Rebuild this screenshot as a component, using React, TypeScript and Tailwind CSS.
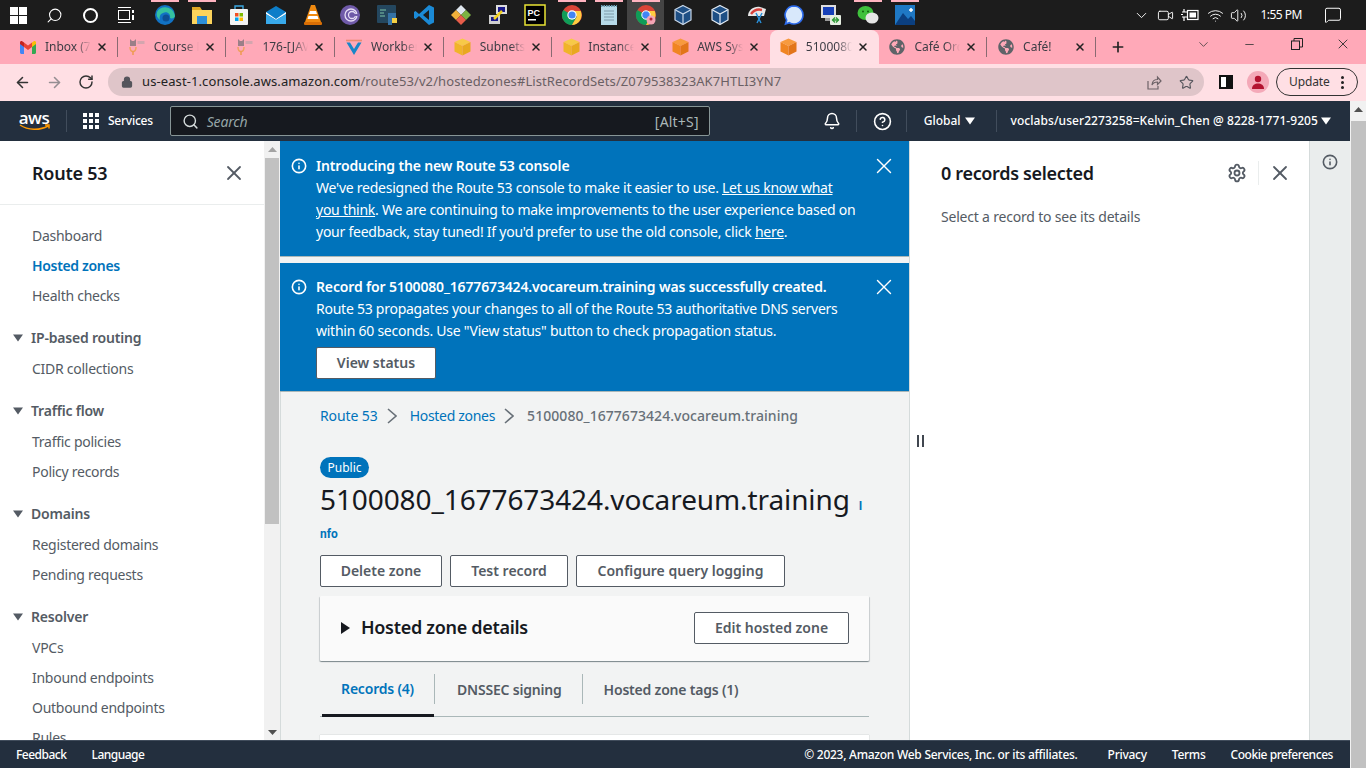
import { ArrowLeft, ArrowRight, Bell, ChevronDown, CircleHelp, Info, Lock, MessageSquare, Minus, Plus, RotateCw, Search, Settings, Star, Video, Volume2, Wifi, X } from "lucide-react";
import { FaGlobeAmericas } from "react-icons/fa";

const sans = "font-['Noto_Sans',sans-serif]";

// favicons
const Cube = ({ light, mid, dark }: { light: string; mid: string; dark: string }) => (
  <svg width="17" height="18" viewBox="0 0 17 18" className="shrink-0">
    <path d="M8.500 0.500 16.500 4 8.500 8 0.500 4Z" fill={light} />
    <path d="M0.500 4 8.500 8V17.500L0.500 13.500Z" fill={mid} />
    <path d="M16.500 4 8.500 8V17.500L16.500 13.500Z" fill={dark} />
  </svg>
);
const GmailIcon = () => (
  <svg width="16" height="13" viewBox="0 0 16 13" className="shrink-0">
    <path d="M0 2v9.500C0 12.300.7 13 1.500 13H4V5.500Z" fill="#4285f4" />
    <path d="M16 2v9.500c0 .8-.7 1.500-1.500 1.500H12V5.500Z" fill="#34a853" />
    <path d="M12 1.500V6l4-3V1.500C16 .2 14.500-.4 13.500.4Z" fill="#fbbc04" />
    <path d="M4 6V1.500L8 4.500l4-3V6L8 9Z" fill="#ea4335" />
    <path d="M0 1.500V3l4 3V1.500L2.500.4C1.500-.4 0 .2 0 1.500Z" fill="#c5221f" />
  </svg>
);
const CatIcon = () => (
  <svg width="18" height="18" viewBox="0 0 18 18" className="shrink-0">
    <path d="M2 1 4 3H6L8 1V8H2Z" fill="#9b7f88" />
    <rect x="9.500" y="3" width="7" height="3" fill="#d4a5ae" />
    <path d="M2 9C2 15 8 15 8 9" stroke="#f0a060" strokeWidth="1.500" fill="none" />
    <path d="M5 13V17" stroke="#ee9a50" strokeWidth="1.500" />
  </svg>
);
const VIcon = () => (
  <svg width="18" height="17" viewBox="0 0 18 17" className="shrink-0">
    <path d="M1 1.500H17" stroke="#ee8a70" strokeWidth="1.600" />
    <path d="M1.500 3.500 9 16 16.500 3.500H13L9 10 5 3.500Z" fill="#1a86c8" />
  </svg>
);
const Globe = () => <FaGlobeAmericas className="h-4 w-4 shrink-0 text-[#5f6368]" />;

// taskbar icons
const TaskIcons = [
  <svg key="edge" width="22" height="22" viewBox="0 0 22 22"><circle cx="11" cy="11" r="10" fill="#1172c4" /><path d="M3 8C6 1 19 1 21 12c0 2-3 3-5 2 1-4-3-7-7-5-3 1-4 4-3 7C3 14 2 11 3 8Z" fill="#35c1a0" /><circle cx="12" cy="14" r="3.500" fill="#0d4f94" /></svg>,
  <svg key="folder" width="22" height="20" viewBox="0 0 22 20"><path d="M1 2h8l2 3H1Z" fill="#e0a626" /><rect x="1" y="5" width="20" height="14" fill="#fbd35c" /><rect x="6" y="11" width="10" height="8" fill="#2d8fd8" /></svg>,
  <svg key="store" width="20" height="22" viewBox="0 0 20 22"><path d="M6 5V2h8v3" stroke="#3ba7e0" strokeWidth="1.400" fill="none" /><rect x="1" y="5" width="18" height="16" rx="1" fill="#f4f4f4" /><rect x="6" y="9" width="3.500" height="3.500" fill="#f25022" /><rect x="10.500" y="9" width="3.500" height="3.500" fill="#7fba00" /><rect x="6" y="13.500" width="3.500" height="3.500" fill="#00a4ef" /><rect x="10.500" y="13.500" width="3.500" height="3.500" fill="#ffb900" /></svg>,
  <svg key="mail" width="22" height="20" viewBox="0 0 22 20"><path d="M1 7 11 1l10 6v12H1Z" fill="#0d7ec9" /><path d="M1 7l10 7 10-7v2L11 15 1 9Z" fill="#fff" /><path d="M1 9l10 6 10-6v10H1Z" fill="#38a9ea" /></svg>,
  <svg key="vlc" width="20" height="22" viewBox="0 0 20 22"><path d="M8 1h4l6 17H2Z" fill="#f08a10" /><path d="M7 7h6l1 3H6ZM5.500 12h9l1 3h-11Z" fill="#fff" /><rect x="1" y="18" width="18" height="3" rx="1" fill="#d96e05" /></svg>,
  <svg key="tor" width="22" height="22" viewBox="0 0 22 22"><circle cx="11" cy="11" r="10" fill="#6f5aa8" /><circle cx="12" cy="11" r="6" fill="none" stroke="#e6def5" strokeWidth="1.300" /><circle cx="13" cy="11" r="3.500" fill="none" stroke="#e6def5" strokeWidth="1.300" /><rect x="13" y="10" width="8" height="2" fill="#6f5aa8" /></svg>,
  <svg key="idle" width="22" height="22" viewBox="0 0 22 22"><rect x="1" y="1" width="19" height="18" rx="1" fill="#24475f" /><path d="M4 6h6M4 9h4M4 12h5" stroke="#7fc6a8" strokeWidth="1.200" /><path d="M12 9h8v5h-4v7h-4Z" fill="#3572a5" /><path d="M16 14h5v5h-5Z" fill="#f5cf44" /></svg>,
  <svg key="code" width="22" height="22" viewBox="0 0 22 22"><path d="M16 1 21 3.500v15L16 21 6 12l-3.500 3L1 14V8l1.500-1L6 10Z" fill="#1b8ad6" /><path d="M16 6v10l-6-5Z" fill="#1c1c1c" /></svg>,
  <svg key="git" width="22" height="22" viewBox="0 0 22 22"><path d="M11 1l5 5-5 5-5-5Z" fill="#dfe7ef" /><path d="M6 6l5 5-5 5-5-5Z" fill="#f0b03a" /><path d="M16 6l5 5-5 5-5-5Z" fill="#7cb342" /><path d="M11 11l5 5-5 5-5-5Z" fill="#e85d4a" /></svg>,
  <svg key="putty" width="22" height="22" viewBox="0 0 22 22"><rect x="9" y="1" width="11" height="9" fill="#dcdcdc" /><rect x="11" y="3" width="7" height="5" fill="#1a1a8c" /><rect x="2" y="11" width="11" height="9" fill="#cfcfcf" /><rect x="4" y="13" width="7" height="4" fill="#1a1a8c" /><path d="M7 15 15 7" stroke="#f3d21f" strokeWidth="2.500" /></svg>,
  <svg key="pycharm" width="22" height="22" viewBox="0 0 22 22"><rect x="1" y="1" width="20" height="20" fill="#000" stroke="#e9e334" strokeWidth="1.500" /><rect x="4" y="15" width="8" height="1.500" fill="#fff" /><text x="3.500" y="12" fill="#fff" fontSize="9" fontWeight="700" fontFamily="Liberation Sans">PC</text></svg>,
  <svg key="chrome" width="22" height="22" viewBox="0 0 22 22"><circle cx="11" cy="11" r="10" fill="#db4437" /><path d="M11 11 2.300 6A10 10 0 0 0 11 21l5-8.500Z" fill="#0f9d58" /><path d="M11 7h8.700A10 10 0 0 1 11 21l5-8.500Z" fill="#ffcd40" /><circle cx="11" cy="11" r="4.700" fill="#fff" /><circle cx="11" cy="11" r="3.600" fill="#4285f4" /></svg>,
  <svg key="notepad" width="20" height="22" viewBox="0 0 20 22"><rect x="2" y="2" width="16" height="19" fill="#b7dbe9" /><path d="M2 2h16" stroke="#6a9cb2" strokeWidth="2" strokeDasharray="1.500 1" /><path d="M5 7h10M5 10h10M5 13h10M5 16h10" stroke="#7d99a8" /></svg>,
  <svg key="chrome2" width="22" height="22" viewBox="0 0 22 22"><circle cx="11" cy="11" r="10" fill="#db4437" /><path d="M11 11 2.300 6A10 10 0 0 0 11 21l5-8.500Z" fill="#0f9d58" /><path d="M11 7h8.700A10 10 0 0 1 11 21l5-8.500Z" fill="#ffcd40" /><circle cx="11" cy="11" r="4.200" fill="#4285f4" stroke="#fff" /><circle cx="16" cy="16" r="4.500" fill="#f3a5b5" /><circle cx="16" cy="15" r="1.500" fill="#b3263c" /></svg>,
  <svg key="vbox1" width="20" height="22" viewBox="0 0 20 22"><path d="M10 1.500 18 5.500v10.500L10 20.500 2 16V5.500Z" fill="#1e4f85" stroke="#c9d8ea" strokeWidth="1.200" /><path d="M2.500 6 10 10l7.500-4M10 10v10" stroke="#c9d8ea" strokeWidth="1.200" fill="none" /></svg>,
  <svg key="vbox2" width="20" height="22" viewBox="0 0 20 22"><path d="M10 1.500 18 5.500v10.500L10 20.500 2 16V5.500Z" fill="#1e4f85" stroke="#e4ecf5" strokeWidth="1.200" /><path d="M2.500 6 10 10l7.500-4M10 10v10" stroke="#e4ecf5" strokeWidth="1.200" fill="none" /></svg>,
  <svg key="snip" width="22" height="22" viewBox="0 0 22 22"><path d="M2 12C2 6 8 2 14 3l6 2-2 7H6Z" fill="#e8e8e8" /><path d="M5 10C8 6 12 5 16 6" stroke="#d8403a" strokeWidth="2.500" fill="none" /><path d="M10 9 15 19M16 9 11 19" stroke="#2a8fd8" strokeWidth="1.500" /></svg>,
  <svg key="signal" width="22" height="22" viewBox="0 0 22 22"><path d="M11 2a9 9 0 1 1-4.700 16.700L2.500 20l1.200-3.900A9 9 0 0 1 11 2Z" fill="#d8e8fb" stroke="#2c6bed" strokeWidth="1.600" /></svg>,
  <svg key="remote" width="22" height="22" viewBox="0 0 22 22"><rect x="1" y="1" width="15" height="13" fill="#dedede" /><rect x="3" y="3" width="11" height="8" fill="#1740b8" /><rect x="5" y="14" width="6" height="3" fill="#999" /><rect x="10" y="11" width="11" height="10" rx="1" fill="#e6efe2" /><path d="M12 16h7M15 13.500 12.500 16 15 18.500M16 13.500 18.500 16 16 18.500" stroke="#2f9a36" strokeWidth="1.300" fill="none" /></svg>,
  <svg key="wechat" width="22" height="20" viewBox="0 0 22 20"><ellipse cx="8.500" cy="8" rx="8" ry="7" fill="#3fc13c" /><circle cx="6" cy="6.500" r="1" fill="#14620f" /><circle cx="11" cy="6.500" r="1" fill="#14620f" /><ellipse cx="15" cy="13" rx="6.500" ry="5.500" fill="#e6e6e6" /></svg>,
  <svg key="photos" width="22" height="22" viewBox="0 0 22 22"><rect x="1" y="1" width="20" height="20" fill="#1f78c4" /><path d="M1 21 9 9l5 6 3-3 4 5v4Z" fill="#0b3f80" /><path d="M15 6h4M17 4v4" stroke="#fff" strokeWidth="1.500" /></svg>,
];
const activeSlots: Record<number, boolean> = { 0: true, 1: true, 11: true, 12: true, 13: true, 19: true, 20: true };

const yellowCube = <Cube light="#f7c948" mid="#f0b429" dark="#e8a820" />;
const orangeCube = <Cube light="#f79a3e" mid="#f08522" dark="#e2751a" />;

const tabs = [
  { title: "Inbox (7", icon: <GmailIcon /> },
  { title: "Course M", icon: <CatIcon /> },
  { title: "176-[JAVA", icon: <CatIcon /> },
  { title: "Workbench", icon: <VIcon /> },
  { title: "Subnets", icon: yellowCube },
  { title: "Instances", icon: yellowCube },
  { title: "AWS Sys", icon: orangeCube },
  { title: "5100080", icon: orangeCube, active: true },
  { title: "Café Orde", icon: <Globe /> },
  { title: "Café!", icon: <Globe /> },
];

function Taskbar() {
  return (
    <div className="flex h-[30px] items-stretch bg-[#1c1c1c] text-white">
      <div className="flex w-[36px] items-center justify-center pl-[1px]">
        <div className="grid grid-cols-2 gap-[1px]">
          <i className="h-[8px] w-[8px] bg-white" />
          <i className="h-[8px] w-[8px] bg-white" />
          <i className="h-[8px] w-[8px] bg-white" />
          <i className="h-[8px] w-[8px] bg-white" />
        </div>
      </div>
      <div className="flex w-[36px] items-center justify-center">
        <Search className="h-[17px] w-[17px] -scale-x-100" strokeWidth={1.5} />
      </div>
      <div className="flex w-[36px] items-center justify-center">
        <span className="h-[15px] w-[15px] rounded-full border-2 border-white" />
      </div>
      <div className="flex w-[36px] items-center justify-center">
        <svg width="17" height="16" viewBox="0 0 17 16" fill="none" stroke="#fff">
          <path d="M0 .5h13M0 15.500h13" />
          <rect x=".5" y="3.500" width="11" height="9" />
          <path d="M15 3v3M15 8v5" strokeWidth="2" />
        </svg>
      </div>
      <div className="w-[2px]" />
      {TaskIcons.map((icon, i) => (
        <div key={i} className={`flex w-[37px] flex-col items-center ${i === 13 ? "bg-[#444]" : ""}`}>
          <div className={`h-[2px] w-[28px] ${activeSlots[i] ? "bg-[#ffb3c0]" : ""}`} />
          <div className="flex flex-1 items-center justify-center pb-[2px]">{icon}</div>
        </div>
      ))}
      <div className="flex-1" />
      <div className="flex items-center pr-[24px]">
        <ChevronDown className="mr-[7px] h-[17px] w-[17px]" strokeWidth={1.3} />
        <Video className="mr-[7px] h-[17px] w-[17px]" strokeWidth={1.3} />
        <svg width="18" height="14" viewBox="0 0 18 14" fill="none" stroke="#fff" strokeWidth="1.200" className="mr-[8px]">
          <path d="M1 4h5M1 9h5M3 1v3M3 9v4M0 6.500h2" />
          <rect x="6.500" y="2.500" width="10.500" height="9" />
          <rect x="8.500" y="4.500" width="6.500" height="5" fill="#fff" stroke="none" />
        </svg>
        <Wifi className="mr-[6px] h-[17px] w-[17px]" strokeWidth={1.3} />
        <Volume2 className="h-[17px] w-[17px]" strokeWidth={1.3} />
        <span className="ml-[13px] mr-[22px] text-[12px] tracking-[-0.5px]">1:55 PM</span>
        <MessageSquare className="h-[18px] w-[18px]" strokeWidth={1.3} />
      </div>
    </div>
  );
}

function TabStrip() {
  return (
    <div className="flex h-[34px] items-stretch bg-[#ffa9b8] pl-[9px] text-[12px] text-[#3c3c44]">
      {tabs.map((t, i) => {
        const nextActive = tabs[i + 1]?.active;
        return (
          <div
            key={t.title}
            className={`flex w-[108.700px] shrink-0 items-center pl-[10px] ${t.active ? "rounded-t-[8px] bg-[#ffdfe4]" : ""}`}
          >
            <div className="flex w-[18px] justify-center">{t.icon}</div>
            <div className="ml-[8px] w-[46px] overflow-hidden whitespace-nowrap [mask-image:linear-gradient(to_right,black_68%,transparent)]">{t.title}</div>
            <X className="ml-[5px] h-[12px] w-[12px] shrink-0 text-[#222]" strokeWidth={3} />
            {!t.active && !nextActive && <div className="ml-[9px] h-[20px] w-px bg-[#8a6a72]" />}
          </div>
        );
      })}
      <div className="ml-[14px] flex items-center">
        <Plus className="h-[16px] w-[16px] text-[#222]" strokeWidth={2.5} />
      </div>
      <div className="flex-1" />
      <div className="flex items-center pr-[15px] pb-[6px] text-[#333]">
        <ChevronDown className="mr-[32px] h-[15px] w-[15px]" strokeWidth={1.2} />
        <Minus className="mr-[35px] h-[13px] w-[13px]" strokeWidth={1.5} />
        <svg width="12" height="12" viewBox="0 0 12 12" fill="none" stroke="#222" className="mr-[32px]">
          <rect x=".5" y="3" width="8" height="8.500" />
          <path d="M3 3V.5h8.500V9H9" />
        </svg>
        <X className="h-[16px] w-[16px]" strokeWidth={1.4} />
      </div>
    </div>
  );
}

function Toolbar() {
  return (
    <div className="flex h-[37px] items-center bg-[#ffdfe4] pb-[1px]">
      <div className="flex w-[108px] items-center pl-[14px]">
        <ArrowLeft className="h-[17px] w-[17px] text-[#333]" strokeWidth={2.2} />
        <ArrowRight className="ml-[15px] h-[17px] w-[17px] text-[#958e92]" strokeWidth={2.2} />
        <RotateCw className="ml-[15px] h-[16px] w-[16px] text-[#333]" strokeWidth={2.2} />
      </div>
      <div className="flex h-[28px] w-[1096px] items-center rounded-full bg-[#dfc5c9] pl-[13px] pr-[10px] tracking-[0.1px]">
        <Lock className="h-[12px] w-[12px] fill-[#55555c] text-[#55555c]" strokeWidth={2.500} />
        <span className="ml-[9px] text-[13px] text-[#222]">us-east-1.console.aws.amazon.com</span>
        <span className="text-[13px] text-[#6a6064]">/route53/v2/hostedzones#ListRecordSets/Z079538323AK7HTLI3YN7</span>
        <div className="flex-1" />
        <svg width="15" height="15" viewBox="0 0 15 15" fill="none" stroke="#6e6368" strokeWidth="1.200">
          <path d="M1 6v8h10v-3" />
          <path d="M5 10c0-4 3-5.500 5.500-5.500V2L14 6l-3.500 3.500V7C8 7 6 8 5 10Z" />
        </svg>
        <Star className="ml-[17px] h-[15px] w-[15px] text-[#55555c]" strokeWidth={1.8} />
      </div>
      <div className="ml-[15px] h-[14px] w-[14px] border-2 border-[#111] bg-[linear-gradient(to_right,#fff_50%,#111_50%)]" />
      <div className="ml-[14px] flex h-[22px] w-[22px] items-center justify-center rounded-full bg-[#f4a9b8]">
        <svg width="14" height="14" viewBox="0 0 14 14" fill="#b3122f">
          <circle cx="7" cy="4" r="3.200" />
          <path d="M1 14c0-4 3-5.500 6-5.500S13 10 13 14Z" />
        </svg>
      </div>
      <div className="ml-[7px] flex h-[28px] w-[82px] items-center rounded-full border border-[#333] pl-[12px] text-[12px] tracking-[-0.1px] text-[#333]">
        Update
        <div className="ml-[11px] flex flex-col gap-[2px]">
          <i className="h-[3px] w-[3px] rounded-full bg-[#222]" />
          <i className="h-[3px] w-[3px] rounded-full bg-[#222]" />
          <i className="h-[3px] w-[3px] rounded-full bg-[#222]" />
        </div>
      </div>
    </div>
  );
}

function Caret({ className = "" }: { className?: string }) {
  return (
    <svg width="10" height="8" viewBox="0 0 10 8" className={className} fill="currentColor">
      <path d="M0 .5h10L5 7.500Z" />
    </svg>
  );
}

function AwsNav() {
  return (
    <div className="flex h-[40px] shrink-0 items-center bg-[#232f3e] text-white">
      <div className="ml-[18px] flex w-[32px] flex-col items-center">
        <span className="font-['Open_Sans',sans-serif] text-[17px] leading-[13px] font-semibold tracking-[-0.5px]">aws</span>
        <svg width="31" height="7" viewBox="0 0 31 7" fill="none" stroke="#f90" strokeWidth="1.500">
          <path d="M1 1c8 5.500 20 5.500 28 1M26 1h4v3.500" />
        </svg>
      </div>
      <div className="mx-[16px] h-[22px] w-px bg-[#414d5c]" />
      <div className="grid grid-cols-3 gap-[2px]">
        {[0, 1, 2, 3, 4, 5, 6, 7, 8].map((n) => (
          <i key={n} className="h-[4px] w-[4px] bg-white" />
        ))}
      </div>
      <span className="ml-[9px] text-[12px] font-medium tracking-[-0.25px]">Services</span>
      <div className="ml-[17px] flex h-[30px] w-[540px] items-center rounded-[2px] border border-[#879596] bg-[#16191f] pl-[11px] pr-[10px] text-[14px] tracking-[-0.2px]">
        <Search className="h-[17px] w-[17px] text-[#d5dbdb]" strokeWidth={2} />
        <span className="ml-[8px] text-[#95a5a6] italic">Search</span>
        <div className="flex-1" />
        <span className="tracking-[0.2px] text-[#aab7b8]">[Alt+S]</span>
      </div>
      <Bell className="ml-[113px] h-[18px] w-[18px]" strokeWidth={2} />
      <div className="ml-[15px] h-[22px] w-px bg-[#414d5c]" />
      <CircleHelp className="ml-[16px] h-[19px] w-[19px]" strokeWidth={2} />
      <div className="ml-[14px] h-[22px] w-px bg-[#414d5c]" />
      <span className="ml-[17px] text-[12px] font-medium">Global</span>
      <Caret className="ml-[4px]" />
      <div className="ml-[21px] h-[22px] w-px bg-[#414d5c]" />
      <span className="ml-[14px] text-[12px] font-medium tracking-[0.06px] whitespace-nowrap">voclabs/user2273258=Kelvin_Chen @ 8228-1771-9205</span>
      <Caret className="ml-[3px]" />
    </div>
  );
}

const navGroups: { title?: string; items: string[] }[] = [
  { items: ["Dashboard", "Hosted zones", "Health checks"] },
  { title: "IP-based routing", items: ["CIDR collections"] },
  { title: "Traffic flow", items: ["Traffic policies", "Policy records"] },
  { title: "Domains", items: ["Registered domains", "Pending requests"] },
  { title: "Resolver", items: ["VPCs", "Inbound endpoints", "Outbound endpoints", "Rules"] },
];

function ScrollArrow({ up, light }: { up?: boolean; light?: boolean }) {
  return (
    <div className="flex h-[16px] items-center justify-center">
      <svg width="9" height="5" viewBox="0 0 9 5" fill={light ? "#a3a3a3" : "#505050"}>
        <path d={up ? "M0 5 4.500 0 9 5Z" : "M0 0 4.500 5 9 0Z"} />
      </svg>
    </div>
  );
}

function Sidebar() {
  return (
    <div className="flex w-[264px] shrink-0 flex-col bg-white">
      <div className="flex h-[64px] shrink-0 items-center justify-between border-b border-[#eaeded] pt-[1px] pl-[32px] pr-[18px]">
        <span className="text-[18px] font-semibold tracking-[-0.25px] text-[#16191f]">Route 53</span>
        <X className="h-[24px] w-[24px] text-[#545b64]" strokeWidth={1.8} />
      </div>
      <div className="pt-[16px] text-[14px] leading-[30px] tracking-[-0.27px] text-[#545b64]">
        {navGroups.map((g, i) => (
          <div key={i} className={i > 0 ? "mt-[12px]" : ""}>
            {g.title && (
              <div className="mb-[1px] flex items-center pl-[13px]">
                <Caret />
                <span className="ml-[8px] font-semibold tracking-[-0.2px]">{g.title}</span>
              </div>
            )}
            {g.items.map((item) => (
              <div key={item} className={`pl-[32px] ${item === "Hosted zones" ? "font-semibold tracking-[-0.33px] text-[#0073bb]" : ""}`}>
                {item}
              </div>
            ))}
          </div>
        ))}
      </div>
    </div>
  );
}

function SideScrollbar() {
  return (
    <div className="flex w-[16px] shrink-0 flex-col bg-[#f1f1f1]">
      <ScrollArrow up light />
      <div className="mx-[1px] mt-[1px] h-[366px] bg-[#c1c1c1]" />
      <div className="flex-1" />
      <ScrollArrow />
    </div>
  );
}

function Banner({ title, children, className = "" }: { title: string; children: React.ReactNode; className?: string }) {
  return (
    <div className={`relative border-b border-[#aab7b8] bg-[#0073bb] pl-[36px] text-[14px] leading-[22px] tracking-[-0.25px] text-white ${className}`}>
      <Info className="absolute left-[11px] mt-[3px] h-[16px] w-[16px]" strokeWidth={2.4} />
      <X className="absolute right-[12px] mt-[-2px] h-[26px] w-[26px]" strokeWidth={1.3} />
      <div className="font-semibold tracking-[-0.15px]">{title}</div>
      {children}
    </div>
  );
}

function Btn({ children, className = "" }: { children: React.ReactNode; className?: string }) {
  return (
    <div className={`flex h-[32px] items-center justify-center rounded-[2px] border border-[#545b64] bg-white text-[14px] font-semibold tracking-normal text-[#545b64] ${className}`}>
      {children}
    </div>
  );
}

const Crumb = () => (
  <svg width="10" height="16" viewBox="0 0 10 16" fill="none" stroke="#687078" strokeWidth="1.600" className="mr-[13px] ml-[9px] shrink-0">
    <path d="M1 1l8 7-8 7" />
  </svg>
);

function Content() {
  return (
    <div className="w-[629px] shrink-0 overflow-hidden bg-[#f2f3f3]">
      <Banner title="Introducing the new Route 53 console" className="h-[116px] pt-[14px]">
        <div className="whitespace-nowrap">We've redesigned the Route 53 console to make it easier to use. <u>Let us know what</u></div>
        <div className="whitespace-nowrap"><u>you think</u>. We are continuing to make improvements to the user experience based on</div>
        <div className="whitespace-nowrap">your feedback, stay tuned! If you'd prefer to use the old console, click <u>here</u>.</div>
      </Banner>
      <Banner title="Record for 5100080_1677673424.vocareum.training was successfully created." className="mt-[6px] h-[129px] pt-[13px]">
        <div className="whitespace-nowrap">Route 53 propagates your changes to all of the Route 53 authoritative DNS servers</div>
        <div className="whitespace-nowrap">within 60 seconds. Use "View status" button to check propagation status.</div>
        <Btn className="mt-[5px] w-[120px]">View status</Btn>
      </Banner>
      <div className="h-full border-l border-[#d5dbdb] pl-[39px] pr-[40px]">
        <div className="flex h-[47px] items-center text-[14px] whitespace-nowrap">
          <span className="tracking-[-0.1px] text-[#0073bb]">Route 53</span>
          <Crumb />
          <span className="tracking-[-0.3px] text-[#0073bb]">Hosted zones</span>
          <Crumb />
          <span className="font-medium tracking-[0.05px] text-[#687078]">5100080_1677673424.vocareum.training</span>
        </div>
        <div className="mt-[18px] flex h-[21px] w-[49px] items-center justify-center rounded-full bg-[#0073bb] text-[12px] text-white">Public</div>
        <div className="mt-[7px] h-[56px] w-[545px] text-[28px] leading-[28px] text-[#16191f]">
          <span className="mr-[9px] tracking-[-0.1px]">5100080_1677673424.vocareum.training</span>
          <span className="font-['Roboto',sans-serif] text-[12px] leading-none font-bold break-all text-[#0073bb]">Info</span>
        </div>
        <div className="mt-[14px] flex gap-[8px]">
          <Btn className="w-[122px] pb-[1px]">Delete zone</Btn>
          <Btn className="w-[118px] pb-[1px]">Test record</Btn>
          <Btn className="w-[209px] pb-[1px]">Configure query logging</Btn>
        </div>
        <div className="mt-[9px] flex h-[65px] items-center rounded-[1px] bg-[#fafafa] pr-[20px] pb-[2px] pl-[21px] shadow-[0_1px_1px_0_rgba(0,28,36,0.3),1px_1px_1px_0_rgba(0,28,36,0.15),-1px_1px_1px_0_rgba(0,28,36,0.15)]">
          <svg width="9" height="12" viewBox="0 0 9 12" fill="#16191f"><path d="M0 0 9 6 0 12Z" /></svg>
          <span className="ml-[11px] text-[18px] font-semibold tracking-[-0.3px] text-[#16191f]">Hosted zone details</span>
          <div className="flex-1" />
          <Btn className="w-[155px]">Edit hosted zone</Btn>
        </div>
        <div className="flex h-[56px] items-center border-b border-[#aab7b8] pt-[1px] text-[14px] font-semibold tracking-[-0.2px] text-[#545b64]">
          <div className="ml-[2px] flex h-[56px] w-[112px] items-center justify-center border-b-[3px] border-[#16191f] pt-[1px] pr-[1px] text-[#0073bb]">Records (4)</div>
          <div className="h-[30px] w-px bg-[#aab7b8]" />
          <div className="pr-[20px] pl-[22px]">DNSSEC signing</div>
          <div className="h-[30px] w-px bg-[#aab7b8]" />
          <div className="pl-[21px]">Hosted zone tags (1)</div>
        </div>
        <div className="mt-[18px] h-[20px] bg-white shadow-[0_0_1px_0_rgba(0,28,36,0.3)]" />
      </div>
    </div>
  );
}

function DetailPanel() {
  return (
    <div className="relative w-[400px] shrink-0 border-l border-[#d5dbdb] bg-white pl-[31px]">
      {/* split panel drag handle */}
      <div className="absolute top-[294px] left-[7px] flex gap-[3px]">
        <i className="h-[12px] w-[2px] bg-[#414750]" />
        <i className="h-[12px] w-[2px] bg-[#414750]" />
      </div>
      <div className="flex h-[64px] items-center pr-[17px]">
        <span className="text-[18px] font-semibold tracking-[-0.33px] text-[#16191f]">0 records selected</span>
        <div className="flex-1" />
        <Settings className="mr-[-1px] h-[20px] w-[20px] text-[#545b64]" strokeWidth={2.2} />
        <div className="mr-[9px] ml-[12px] h-[24px] w-px bg-[#eaeded]" />
        <X className="h-[24px] w-[24px] text-[#545b64]" strokeWidth={1.8} />
      </div>
      <div className="pt-[1px] text-[14px] leading-[22px] tracking-[-0.2px] text-[#545b64]">Select a record to see its details</div>
    </div>
  );
}

function ToolsRail() {
  return (
    <div className="flex flex-1 justify-center border-l border-[#d5dbdb] bg-[#eaeded] pt-[13px] pr-[1px]">
      <Info className="h-[16px] w-[16px] text-[#545b64]" strokeWidth={2.4} />
    </div>
  );
}

function Footer() {
  return (
    <div className="flex h-[28px] shrink-0 items-center border-t border-[#414d5c] bg-[#232f3e] pl-[16px] pr-[17px] text-[12px] font-medium tracking-[-0.27px] text-white">
      <span className="tracking-[-0.5px]">Feedback</span>
      <span className="ml-[25px] tracking-[-0.5px]">Language</span>
      <div className="flex-1" />
      <span>© 2023, Amazon Web Services, Inc. or its affiliates.</span>
      <span className="ml-[30px]">Privacy</span>
      <span className="ml-[25px]">Terms</span>
      <span className="ml-[25px] tracking-[-0.44px]">Cookie preferences</span>
    </div>
  );
}

export default function App() {
  return (
    <div className={`flex h-screen w-full flex-col overflow-hidden ${sans}`}>
      <Taskbar />
      <TabStrip />
      <Toolbar />
      <div className="flex min-h-0 flex-1">
        <div className="flex min-w-0 flex-1 flex-col">
          <AwsNav />
          <div className="flex min-h-0 flex-1 overflow-hidden">
            <Sidebar />
            <SideScrollbar />
            <Content />
            <DetailPanel />
            <ToolsRail />
          </div>
          <Footer />
        </div>
        <div className="flex w-[16px] shrink-0 flex-col bg-[#f1f1f1]">
          <ScrollArrow up />
          <div className="mt-[4px] ml-[1px] flex-1 bg-[#c1c1c1]" />
        </div>
      </div>
    </div>
  );
}
